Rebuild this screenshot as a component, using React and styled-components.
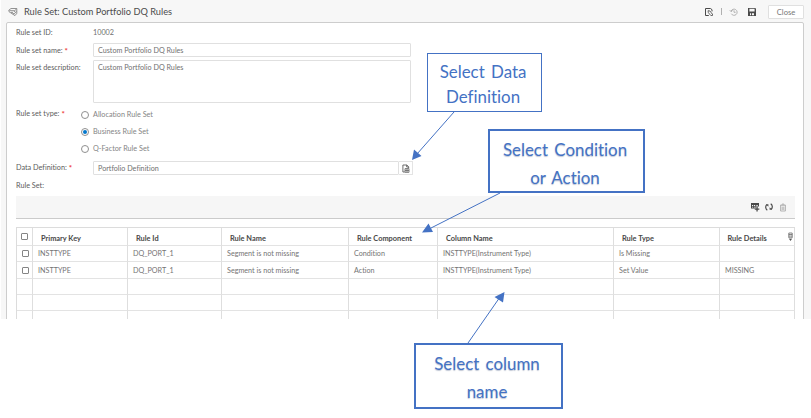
import React from 'react';
import styled, { createGlobalStyle } from 'styled-components';

const GlobalStyle = createGlobalStyle`
  * { box-sizing: border-box; }
  body { margin: 0; background: #fff; font-family: Lato, sans-serif; font-variant-ligatures: none; }
`;

const Page = styled.div`
  position: relative;
  width: 811px;
  height: 418px;
  overflow: hidden;
  background: #fff;
`;

const AppWindow = styled.div`
  height: 319px;
  margin-left: 1px;
  padding: 1px 7px 0 5px;
  overflow: hidden;
  background: #f7f7f7;
`;

const TitleBar = styled.header`
  display: flex;
  align-items: center;
  height: 21px;
  padding: 0 0 0 2px;
`;

const Title = styled.h1`
  flex: 1;
  margin: 0 0 0 6px;
  font-size: 9.26px;
  line-height: 12px;
  font-weight: 400;
  color: #4c4c4c;
`;

const TitleActions = styled.div`
  display: flex;
  align-items: center;
`;

const IconSlot = styled.span`
  display: flex;
  width: ${(p) => p.$w || 10}px;
  height: ${(p) => p.$h || 10}px;
  margin-left: ${(p) => p.$gap || 0}px;
  color: ${(p) => p.$color || '#4a4a4a'};
  svg { display: block; width: 100%; height: 100%; }
`;

const Divider = styled.span`
  width: 1px;
  height: 7px;
  margin-left: 7px;
  background: #b0b0b0;
`;

const CloseButton = styled.button`
  width: 36px;
  height: 14px;
  margin-left: 11px;
  padding: 0;
  border: 1px solid #e0e0e0;
  border-radius: 1px;
  background: #fff;
  font: 7.6px/12px Lato, sans-serif;
  color: #777;
`;

const Panel = styled.main`
  height: 320px;
  padding: 5px 8px 0 9px;
  border: 1px solid #cdcdcd;
  border-radius: 2px;
  background: #fff;
`;

const Field = styled.div`
  display: flex;
  align-items: flex-start;
  height: ${(p) => p.$h}px;
`;

const Label = styled.div`
  width: ${(p) => p.$w || 77}px;
  padding-top: ${(p) => p.$top || 0}px;
  font-size: 7.28px;
  line-height: 10px;
  color: #5c5c5c;
  white-space: nowrap;
`;

const Required = styled.span`
  margin-left: 2px;
  font-weight: 700;
  font-size: 8px;
  line-height: 8px;
  vertical-align: -1px;
  color: #ee3b3b;
`;

const PlainValue = styled.div`
  font-size: 7.24px;
  line-height: 10px;
  color: #707070;
`;

const Input = styled.div`
  width: ${(p) => p.$w || 318}px;
  height: ${(p) => p.$h}px;
  padding: 1.5px 4px;
  border: 1px solid #e0e0e0;
  border-radius: 1px;
  background: #fff;
  font-size: 7.2px;
  line-height: 10px;
  color: #707070;
`;

const LookupButton = styled.div`
  display: flex;
  align-items: center;
  justify-content: center;
  width: 14px;
  height: 14px;
  border: 1px solid #e4e4e4;
  border-left: 0;
  color: #4a4a4a;
  svg { width: 8px; height: 9px; }
`;

const RadioGroup = styled.div`
  display: flex;
  flex-direction: column;
`;

const RadioOption = styled.div`
  display: flex;
  align-items: center;
  gap: 4px;
  height: 17px;
  margin-top: ${(p) => (p.$first ? -3 : 0)}px;
  font-size: 7.25px;
  color: #858585;
`;

const RadioDot = styled.span`
  display: flex;
  align-items: center;
  justify-content: center;
  width: 8px;
  height: 8px;
  border: 1px solid #8f8f8f;
  border-radius: 50%;
  &::after {
    content: '';
    width: 4px;
    height: 4px;
    border-radius: 50%;
    background: ${(p) => (p.$checked ? '#0378cd' : 'transparent')};
  }
`;

const Toolbar = styled.div`
  display: flex;
  align-items: center;
  justify-content: flex-end;
  height: 23px;
  padding-right: 8px;
  border-bottom: 1px solid #cbcbcb;
  background: #f6f6f6;
`;

const Table = styled.div`
  display: grid;
  grid-template-columns: 16px 95px 94px 127px 89px 176px 106px 75px;
  grid-template-rows: 18px 16px 17px 16px 16px 16px;
  height: 92px;
  margin-top: 8px;
  overflow: hidden;
  border-top: 1px solid #dcdcdc;
  border-left: 1px solid #dcdcdc;
`;

const Cell = styled.div`
  display: flex;
  align-items: center;
  padding: 1px 0 0 5px;
  border-right: 1px solid #dedede;
  border-bottom: 1px solid #e3e3e3;
  font-size: 7.2px;
  line-height: 10px;
  color: #747474;
  white-space: nowrap;
`;

const HeadCell = styled(Cell)`
  justify-content: space-between;
  padding: 4px 1px 0 ${(p) => (p.$last ? 7.5 : 8)}px;
  font-size: 7.4px;
  font-weight: 700;
  color: #484848;
`;

const ColumnsSlot = styled.span`
  display: flex;
  width: 5px;
  height: 10px;
  margin-bottom: 4px;
  color: #555;
  svg { width: 100%; height: 100%; }
`;

const CheckCell = styled(Cell)`
  padding: 0 0 0 ${(p) => (p.$head ? 4 : 5)}px;
`;

const Checkbox = styled.span`
  width: 7px;
  height: 7px;
  border: 1px solid #858585;
  border-radius: 1px;
  background: #fff;
`;

const Callout = styled.div`
  position: absolute;
  left: ${(p) => p.$x}px;
  top: ${(p) => p.$y}px;
  width: ${(p) => p.$w}px;
  height: ${(p) => p.$h}px;
  padding: ${(p) => p.$pad}px 3px 0 0;
  border: ${(p) => p.$border}px solid #4472c4;
  background: #fff;
  text-align: center;
  white-space: nowrap;
  font-size: 16.9px;
  word-spacing: 2px;
  line-height: ${(p) => p.$line}px;
  color: #4472c4;
  text-shadow: ${(p) => (p.$shadow ? '0 1px 1px rgba(70, 90, 130, 0.35)' : 'none')};
`;

const Arrows = styled.svg`
  position: absolute;
  left: 0;
  top: 0;
  width: 811px;
  height: 418px;
  pointer-events: none;
`;

const RuleIcon = () => (
  <svg viewBox="0 0 10 10" fill="none" stroke="currentColor" strokeWidth="0.8">
    <path d="M.8 3.2 3 1.5h5.8v4.8L7 8.6 4.5 7 1 4.7Z" />
    <path d="M1.4 3.7h5v1.2M3 5.4h2M8.3 2.2 6.3 4M4.5 6.7l2.2-.2 1.6-2.2" />
  </svg>
);
const PageEditIcon = () => (
  <svg viewBox="0 0 10 10" fill="none" stroke="currentColor" strokeWidth="1">
    <path d="M8 4.4V2.7L6.5 1.5h-5v7h3.3" />
    <path d="M4 3.7 6 4l2.3 3.2M4 3.7l.4 2L6.8 8.5h1.7V6.8" strokeWidth="0.8" />
  </svg>
);
const HistoryIcon = () => (
  <svg viewBox="0 0 10 10" fill="none" stroke="currentColor" strokeWidth="0.9">
    <path d="M2.1 4.2a3.1 3.1 0 1 1 .2 2.5M.8 3.2l1.3 1.5 1.5-1.2M5 3.3v2h1.6" />
  </svg>
);
const SaveIcon = () => (
  <svg viewBox="0 0 10 10" fill="currentColor" fillRule="evenodd">
    <path d="M1 1h7.2L9 1.8V9H1ZM2.4 1.8v2.8h5.2V1.8ZM3 6.2v2h1.1v-2Zm2 0v2h2v-2Z" />
  </svg>
);
const LookupIcon = () => (
  <svg viewBox="0 0 8 9" fill="none" stroke="currentColor" strokeWidth="0.8">
    <path d="M2.8 8H.9V1h3.9L6.7 2.8V4M4.7 1v2h2" />
    <path d="M3 4.6h4v3.7H3ZM3 6.4h4M5 4.6v3.7" strokeWidth="0.7" />
  </svg>
);
const AddRowIcon = () => (
  <svg viewBox="0 0 10 10" fill="currentColor" fillRule="evenodd">
    <path d="M1 1h8v3.4H5.6v2H1ZM2 3v.9h1.2V3Zm2 0v.9h1.2V3ZM2 4.8v.7h1.2v-.7Zm2 0v.7h1v-.7ZM6.2 3v.7H8V3Z" />
    <path d="M6.4 4.8h1.3v1.6h1.6v1.3H7.7v1.7H6.4V7.7H4.8V6.4h1.6Z" />
  </svg>
);
const RefreshIcon = () => (
  <svg viewBox="0 0 10 10" fill="none" stroke="currentColor" strokeWidth="1.2">
    <path d="M3.3 8.2A3.6 3.6 0 0 1 2.8 2.6M6.7 1.8a3.6 3.6 0 0 1 .5 5.6" />
    <path d="M1.8 2.2h2.6v2.6ZM8.2 7.8H5.6V5.2Z" fill="currentColor" stroke="none" />
  </svg>
);
const TrashIcon = () => (
  <svg viewBox="0 0 8 9" fill="none" stroke="currentColor" strokeWidth="0.9">
    <path d="M1 2.3h6M3 2V1.1h2V2M1.6 2.5V8h4.8V2.5M3.2 3.6V7M4.8 3.6V7" />
  </svg>
);
const ColumnsIcon = () => (
  <svg viewBox="0 0 5 10" fill="none" stroke="currentColor" strokeWidth="0.7">
    <path d="M.8 1h3.4v4.8H.8ZM.8 2.5h3.4M.8 4.1h3.4" />
    <path d="M.9 6.7h3.2L2.5 9Z" fill="currentColor" stroke="none" />
  </svg>
);

const headings = ['Primary Key', 'Rule Id', 'Rule Name', 'Rule Component', 'Column Name', 'Rule Type', 'Rule Details'];
const rows = [
  ['INSTTYPE', 'DQ_PORT_1', 'Segment is not missing', 'Condition', 'INSTTYPE(Instrument Type)', 'Is Missing', ''],
  ['INSTTYPE', 'DQ_PORT_1', 'Segment is not missing', 'Action', 'INSTTYPE(Instrument Type)', 'Set Value', 'MISSING'],
];
const emptyRows = [0, 1, 2];
const ruleTypes = ['Allocation Rule Set', 'Business Rule Set', 'Q-Factor Rule Set'];

export default function App() {
  return (
    <Page>
      <GlobalStyle />
      <AppWindow>
        <TitleBar>
          <IconSlot $color="#777"><RuleIcon /></IconSlot>
          <Title>Rule Set: Custom Portfolio DQ Rules</Title>
          <TitleActions>
            <IconSlot><PageEditIcon /></IconSlot>
            <Divider />
            <IconSlot $gap={7} $color="#aaa"><HistoryIcon /></IconSlot>
            <IconSlot $gap={8}><SaveIcon /></IconSlot>
            <CloseButton>Close</CloseButton>
          </TitleActions>
        </TitleBar>
        <Panel>
          <Field $h={15}>
            <Label>Rule set ID:</Label>
            <PlainValue>10002</PlainValue>
          </Field>
          <Field $h={17}>
            <Label $top={3}>Rule set name:<Required>*</Required></Label>
            <Input $h={14}>Custom Portfolio DQ Rules</Input>
          </Field>
          <Field $h={49}>
            <Label $top={3}>Rule set description:</Label>
            <Input $h={43}>Custom Portfolio DQ Rules</Input>
          </Field>
          <Field $h={52}>
            <Label $w={65}>Rule set type:<Required>*</Required></Label>
            <RadioGroup>
              {ruleTypes.map((name, i) => (
                <RadioOption key={name} $first={i === 0}>
                  <RadioDot $checked={i === 1} />
                  {name}
                </RadioOption>
              ))}
            </RadioGroup>
          </Field>
          <Field $h={20}>
            <Label $top={2}>Data Definition:<Required>*</Required></Label>
            <Input $h={14} $w={306}>Portfolio Definition</Input>
            <LookupButton><LookupIcon /></LookupButton>
          </Field>
          <Field $h={15}>
            <Label>Rule Set:</Label>
          </Field>
          <Toolbar>
            <IconSlot><AddRowIcon /></IconSlot>
            <IconSlot $gap={4}><RefreshIcon /></IconSlot>
            <IconSlot $gap={5} $w={8} $h={9} $color="#aaa"><TrashIcon /></IconSlot>
          </Toolbar>
          <Table>
            <CheckCell $head><Checkbox /></CheckCell>
            {headings.map((heading, i) => (
              <HeadCell key={heading} $last={i === 6}>
                {heading}
                {i === 6 && <ColumnsSlot><ColumnsIcon /></ColumnsSlot>}
              </HeadCell>
            ))}
            {rows.map((row, r) => (
              <React.Fragment key={r}>
                <CheckCell><Checkbox /></CheckCell>
                {row.map((value, c) => <Cell key={c}>{value}</Cell>)}
              </React.Fragment>
            ))}
            {emptyRows.map((r) => (
              <React.Fragment key={r}>
                <Cell />
                {headings.map((heading) => <Cell key={heading} />)}
              </React.Fragment>
            ))}
          </Table>
        </Panel>
      </AppWindow>

      <Callout $x={427} $y={53} $w={115} $h={59} $pad={5} $border={1} $line={25}>
        Select Data<br />Definition
      </Callout>
      <Callout $x={488} $y={129} $w={157} $h={64} $pad={5} $border={2} $line={28} $shadow>
        Select Condition<br />or Action
      </Callout>
      <Callout $x={414} $y={343} $w={149} $h={66} $pad={5} $border={2} $line={28} $shadow>
        Select column<br />name
      </Callout>
      <Arrows viewBox="0 0 811 418" fill="#4472c4" stroke="#4472c4" strokeWidth="1">
        <path d="M454 112 417 154M500 193 431 228M468 343 500 297" />
        <path d="M412 160 414 149.5 421.5 156ZM422 232.5 428.5 223.5 433 232ZM504.5 292 503 302.5 494.5 297Z" stroke="none" />
      </Arrows>
    </Page>
  );
}
